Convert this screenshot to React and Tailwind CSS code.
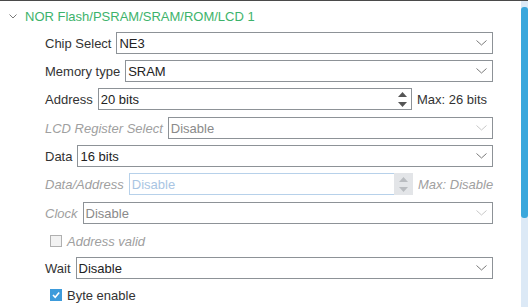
import React from "react";

const font = { fontFamily: '"Liberation Sans", Arial, sans-serif' };

function Chevron({ light }) {
  return (
    <svg width="11" height="6" viewBox="0 0 11 6" className="shrink-0 mr-[5px]">
      <path d="M0.5 0.5 L5.5 5 L10.5 0.5" fill="none" stroke={light ? "#c8c8c8" : "#7a7a7a"} strokeWidth="1" />
    </svg>
  );
}

function Select({ value, disabled }) {
  return (
    <div className="flex-1 h-[22px] border border-[#8d9297] bg-white flex items-center pl-[2px]">
      <span className={disabled ? "text-[#8a8a8a]" : "text-[#222]"}>{value}</span>
      <div className="ml-auto flex items-center">
        <Chevron light={disabled} />
      </div>
    </div>
  );
}

function Row({ label, italic, children, mt }) {
  return (
    <div className={`flex items-center h-[22px] pl-[45px] pr-[28px] gap-[5px] ${mt}`}>
      <span className={italic ? "italic text-[#a0a0a0] whitespace-nowrap" : "text-[#333] whitespace-nowrap"}>{label}</span>
      {children}
    </div>
  );
}

export default function App() {
  return (
    <div className="w-[528px] h-[307px] bg-white overflow-hidden text-[13px] leading-none" style={font}>
      <div className="h-[1px] bg-[#4a4a4a]" />
      <div className="flex h-[306px]">
        <div className="flex-1 flex flex-col">
          <div className="h-[31px] flex items-center pl-[9px]">
            <svg width="8" height="5" viewBox="0 0 8 5" className="mr-[8px]">
              <path d="M0.5 0.5 L4 4 L7.5 0.5" fill="none" stroke="#7a7a7a" strokeWidth="1" />
            </svg>
            <span className="text-[#3db36b]">NOR Flash/PSRAM/SRAM/ROM/LCD 1</span>
          </div>
          <Row label="Chip Select" mt="">
            <Select value="NE3" />
          </Row>
          <Row label="Memory type" mt="mt-[6px]">
            <Select value="SRAM" />
          </Row>
          <div className="flex items-center h-[22px] pl-[45px] pr-[28px] mt-[6px]">
            <span className="text-[#333] mr-[5px]">Address</span>
            <div className="flex-1 h-[22px] border border-[#8d9297] flex items-center pl-[2px]">
              <span className="text-[#222]">20 bits</span>
              <div className="ml-auto mr-[4px] flex flex-col items-center gap-[5px]">
                <svg width="9" height="5" viewBox="0 0 9 5"><path d="M4.5 0 L9 5 L0 5 Z" fill="#555" /></svg>
                <svg width="9" height="5" viewBox="0 0 9 5"><path d="M0 0 L9 0 L4.5 5 Z" fill="#555" /></svg>
              </div>
            </div>
            <span className="w-[81px] pl-[5px] text-[#333] whitespace-nowrap">Max: 26 bits</span>
          </div>
          <Row label="LCD Register Select" italic mt="mt-[7px]">
            <Select value="Disable" disabled />
          </Row>
          <Row label="Data" mt="mt-[6px]">
            <Select value="16 bits" />
          </Row>
          <div className="flex items-center h-[22px] pl-[45px] pr-[28px] mt-[6px]">
            <span className="italic text-[#a0a0a0] mr-[5px]">Data/Address</span>
            <div className="flex-1 h-[22px] flex">
              <div className="flex-1 border border-r-0 border-[#b7d1ea] flex items-center pl-[2px]">
                <span className="text-[#a9c5e3]">Disable</span>
              </div>
              <div className="w-[19px] bg-[#e3e5e8] flex flex-col items-center justify-center gap-[5px]">
                <svg width="9" height="5" viewBox="0 0 9 5"><path d="M4.5 0 L9 5 L0 5 Z" fill="#b9bcc0" /></svg>
                <svg width="9" height="5" viewBox="0 0 9 5"><path d="M0 0 L9 0 L4.5 5 Z" fill="#b9bcc0" /></svg>
              </div>
            </div>
            <span className="w-[80px] pl-[5px] italic text-[#a0a0a0] whitespace-nowrap">Max: Disable</span>
          </div>
          <Row label="Clock" italic mt="mt-[7px]">
            <Select value="Disable" disabled />
          </Row>
          <div className="flex items-center h-[22px] pl-[50px] mt-[6px]">
            <div className="w-[12px] h-[12px] border border-[#b0b0b0] bg-[#f2f2f2] mr-[5px]" />
            <span className="italic text-[#a0a0a0]">Address valid</span>
          </div>
          <Row label="Wait" mt="mt-[5px]">
            <Select value="Disable" />
          </Row>
          <div className="flex items-center h-[22px] pl-[50px] mt-[5px]">
            <div className="w-[12px] h-[12px] bg-[#3d9bdb] mr-[5px] flex items-center justify-center">
              <svg width="10" height="10" viewBox="0 0 10 10">
                <path d="M2 5 L4.2 7.3 L8.2 2.6" fill="none" stroke="#fff" strokeWidth="1.6" />
              </svg>
            </div>
            <span className="text-[#333]">Byte enable</span>
          </div>
        </div>
        <div className="w-[7px] bg-[#dce9f6] flex flex-col">
          <div className="mt-[6px] h-[211px] bg-[#3aa7dc] rounded-[3px]" />
        </div>
      </div>
    </div>
  );
}
